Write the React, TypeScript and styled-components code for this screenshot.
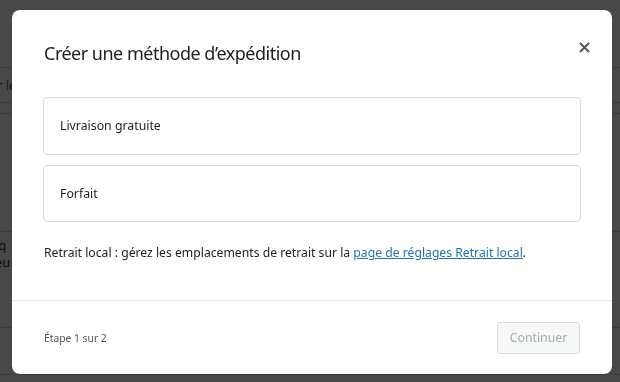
import React from "react";
import styled, { createGlobalStyle } from "styled-components";

const GlobalStyle = createGlobalStyle`
  html, body { margin: 0; padding: 0; }
  body {
    background: #f0f0f1;
    font-family: "Noto Sans", "Open Sans", "Liberation Sans", sans-serif;
    color: #1e1e1e;
    -webkit-font-smoothing: antialiased;
  }
  * { box-sizing: border-box; }
`;

/* ---------- faux admin page behind the overlay ---------- */
const Page = styled.div`
  width: 620px;
  height: 382px;
  overflow: hidden;
  display: flex;
  flex-direction: column;
  background: #f0f0f1;
`;

const PageRow = styled.div<{ $h: number; $line?: boolean; $top?: boolean }>`
  height: ${(p) => p.$h}px;
  flex: none;
  display: flex;
  align-items: ${(p) => (p.$top ? "flex-start" : "center")};
  padding-top: ${(p) => (p.$top ? "5px" : "0")};
  border-bottom: ${(p) => (p.$line ? "1px solid #c3c4c7" : "none")};
  font-size: 13px;
  color: #2c3338;
  white-space: nowrap;
`;

const PageText = styled.span`
  margin-left: -3px;
`;

const PageLink = styled.span`
  color: #2271b1;
`;

const PageCell = styled.div`
  display: flex;
  flex-direction: column;
  margin-left: -5px;
  line-height: 17px;
`;

/* ---------- overlay & modal ---------- */
const Overlay = styled.div`
  position: fixed;
  inset: 0;
  background: rgba(0, 0, 0, 0.7);
  display: flex;
  align-items: flex-start;
  justify-content: flex-start;
  padding: 10px 0 0 12px;
`;

const Modal = styled.div`
  width: 600px;
  height: 364px;
  background: #fff;
  border-radius: 8px;
  display: flex;
  flex-direction: column;
  overflow: hidden;
`;

const Header = styled.div`
  display: flex;
  align-items: flex-start;
  justify-content: space-between;
  padding: 29px 20px 0 32px;
`;

const Title = styled.h1`
  margin: 0;
  font-size: 18px;
  letter-spacing: -0.5px;
  font-weight: 400;
  line-height: 28px;
  color: #1e1e1e;
`;

const CloseButton = styled.button`
  width: 16px;
  height: 16px;
  border: 0;
  padding: 0;
  background: transparent;
  display: flex;
  align-items: center;
  justify-content: center;
  color: #50575e;
  cursor: pointer;
`;

const Body = styled.div`
  flex: 1;
  display: flex;
  flex-direction: column;
  padding: 30px 31px 0 31px;
  border-bottom: 1px solid #e8e8e8;
`;

const Options = styled.div`
  display: flex;
  flex-direction: column;
  gap: 10px;
`;

const OptionCard = styled.button`
  height: 57.5px;
  flex: none;
  display: flex;
  align-items: center;
  padding: 0 16px;
  background: #fff;
  border: 1px solid #dcdcde;
  border-radius: 4px;
  font-family: inherit;
  font-size: 12.3px;
  color: #1e1e1e;
  text-align: left;
  cursor: pointer;
`;

const Note = styled.p`
  margin: 21px 0 0 1px;
  font-size: 12.2px;
  line-height: 20px;
  color: #1e1e1e;
`;

const Link = styled.a`
  color: #2271b1;
  text-decoration: underline;
`;

const Footer = styled.div`
  height: 73px;
  flex: none;
  display: flex;
  align-items: center;
  justify-content: space-between;
  padding: 0 32px;
`;

const Step = styled.span`
  font-size: 10.3px;
  color: #50575e;
`;

const ContinueButton = styled.button`
  height: 32px;
  width: 83px;
  padding: 0;
  background: #f6f7f7;
  border: 1px solid #dcdcde;
  border-radius: 3px;
  font-family: inherit;
  font-size: 12.3px;
  color: #a7aaad;
  cursor: default;
`;

const CloseIcon = () => (
  <svg width="11" height="11" viewBox="0 0 11 11" aria-hidden>
    <path d="M1 1 L10 10 M10 1 L1 10" stroke="currentColor" strokeWidth="2" />
  </svg>
);

export default function App() {
  return (
    <>
      <GlobalStyle />
      <Page>
        <PageRow $h={68} $line />
        <PageRow $h={35} $line>
          <PageText>
            r <PageLink>l</PageLink>e
          </PageText>
        </PageRow>
        <PageRow $h={11} $line />
        <PageRow $h={118} $line />
        <PageRow $h={96} $line $top>
          <PageCell>
            <span>iq</span>
            <span>eu</span>
          </PageCell>
        </PageRow>
        <PageRow $h={47} $line />
      </Page>
      <Overlay>
        <Modal role="dialog" aria-label="Créer une méthode d’expédition">
          <Header>
            <Title>Créer une méthode d’expédition</Title>
            <CloseButton aria-label="Fermer">
              <CloseIcon />
            </CloseButton>
          </Header>
          <Body>
            <Options>
              <OptionCard>Livraison gratuite</OptionCard>
              <OptionCard>Forfait</OptionCard>
            </Options>
            <Note>
              Retrait local : gérez les emplacements de retrait sur la{" "}
              <Link href="#">page de réglages Retrait local</Link>.
            </Note>
          </Body>
          <Footer>
            <Step>Étape 1 sur 2</Step>
            <ContinueButton disabled>Continuer</ContinueButton>
          </Footer>
        </Modal>
      </Overlay>
    </>
  );
}
